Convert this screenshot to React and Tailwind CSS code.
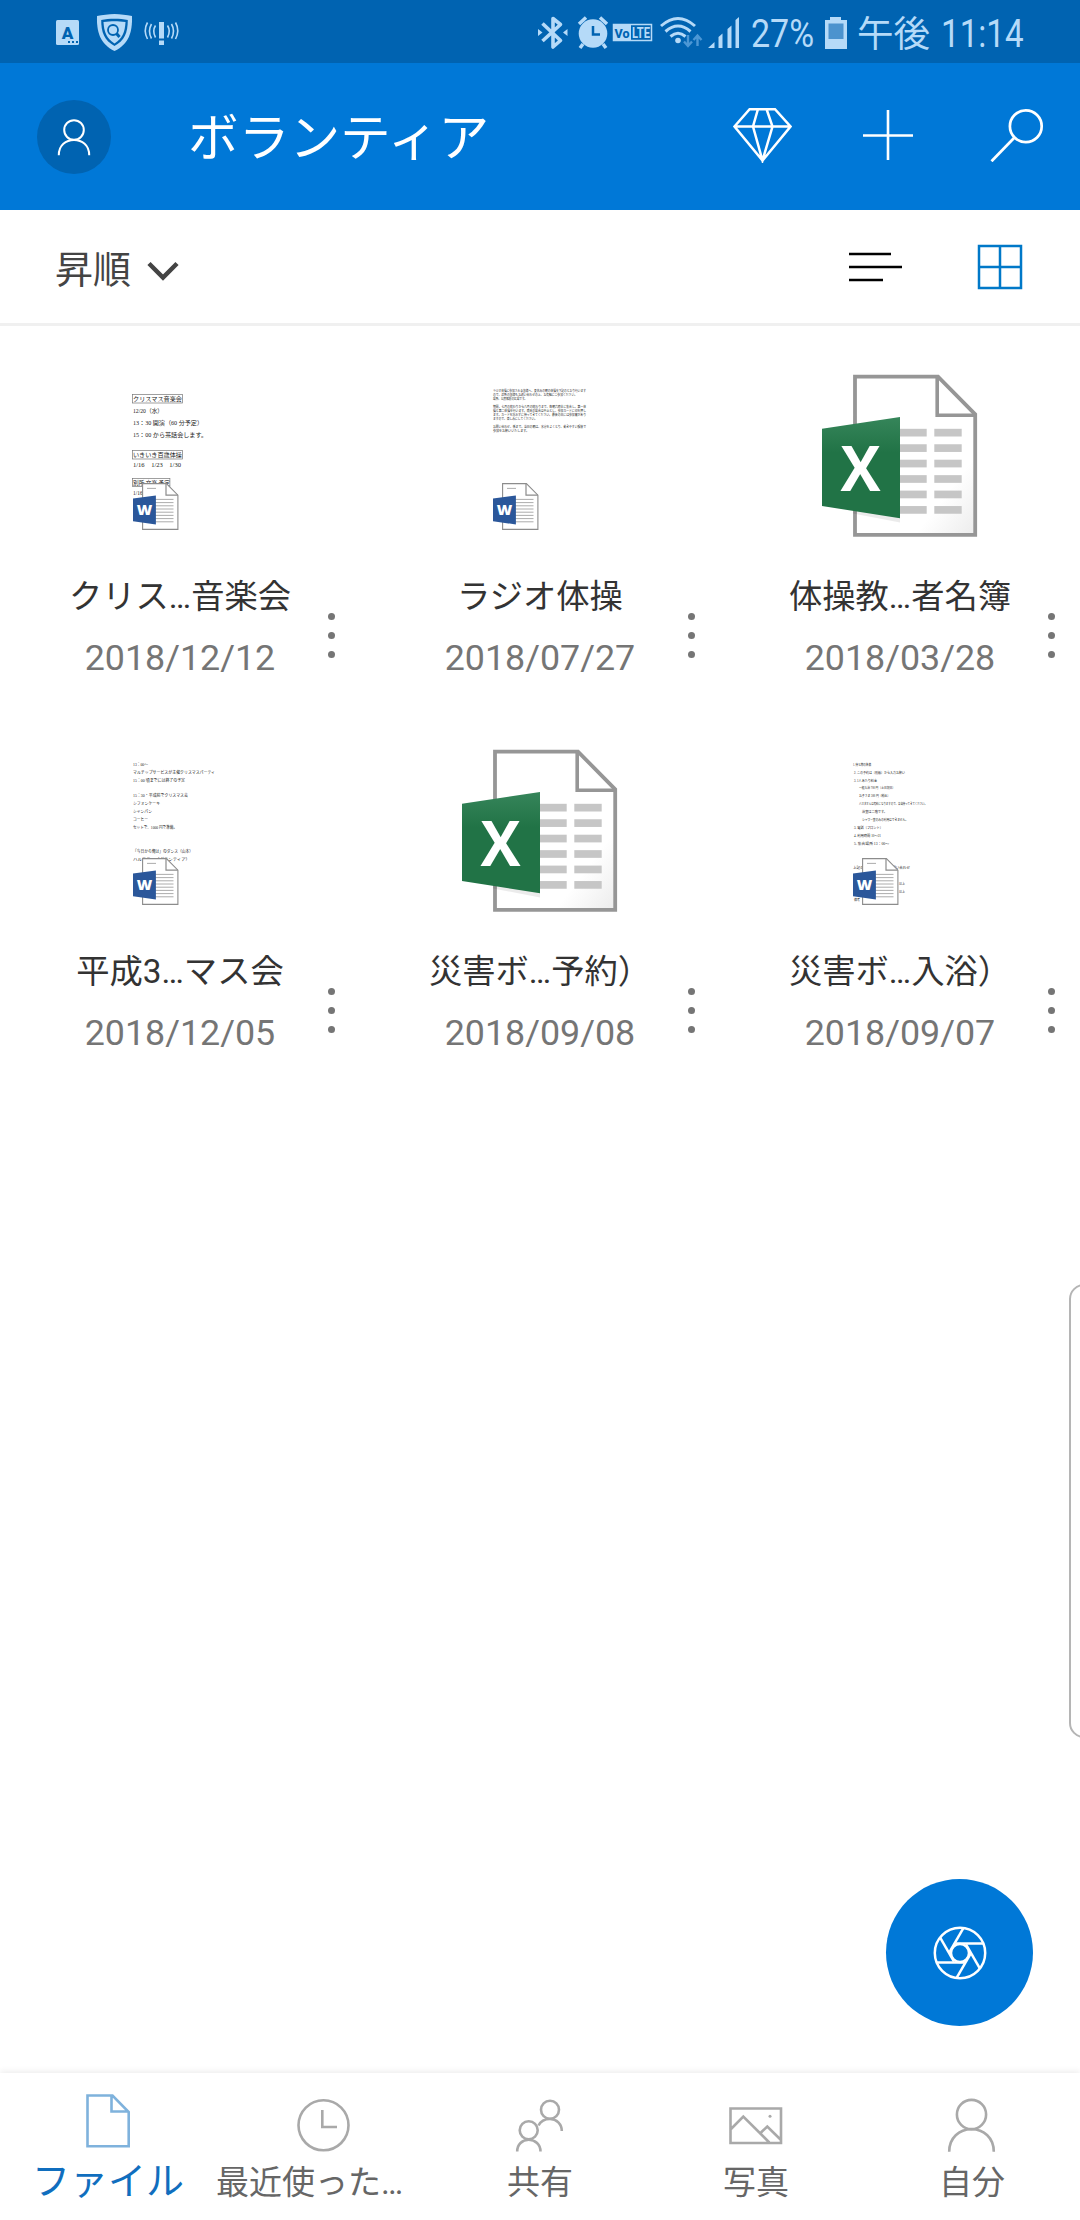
import clsx from 'clsx';

const files = [
    { name: 'クリス…音楽会', date: '2018/12/12', type: 'word', preview: 'concert' },
    { name: 'ラジオ体操', date: '2018/07/27', type: 'word', preview: 'radio' },
    { name: '体操教…者名簿', date: '2018/03/28', type: 'excel' },
    { name: '平成3…マス会', date: '2018/12/05', type: 'word', preview: 'party' },
    { name: '災害ボ…予約）', date: '2018/09/08', type: 'excel' },
    { name: '災害ボ…入浴）', date: '2018/09/07', type: 'word', preview: 'bath' },
];

// x, baseline, width, font size, text
const previews = {
    concert: [
        [1, 34, 49, 6, 'クリスマス音楽会'],
        [1, 46, 30, 6, '12/20（水）'],
        [1, 58, 70, 6, '13：30 開演（60 分予定）'],
        [1, 70, 74, 6, '15：00 から茶話会します。'],
        [1, 90, 49, 6, 'いきいき百歳体操'],
        [1, 99.5, 48, 6, '1/16　1/23　1/30'],
        [1, 117.5, 37, 6, '別所 文楽 予定'],
        [1, 127.5, 20, 6, '1/16 (水)'],
    ],
    radio: [
        [1, 24.5, 93, 3.4, 'ラジオ体操に参加される皆様へ、夏休みの朝の体操を下記のとおり行います'],
        [1, 28.5, 84, 3.4, 'ので、近所の皆様もお誘い合わせの上、お気軽にご参加ください。'],
        [1, 32.5, 34, 3.4, '場所、公民館前の広場です。'],
        [1, 40.5, 93, 3.4, '期間、七月の終わりから八月の終わりまで、毎朝六時半に集合し、第一体'],
        [1, 44.5, 93, 3.4, '操と第二体操を行います。雨天の場合は中止とし、参加カードに印を押し'],
        [1, 48.5, 93, 3.4, 'ます。カードを忘れずに持ってきてください。最後の日には参加賞があり'],
        [1, 52.5, 44, 3.4, 'ますので、楽しみにしてください。'],
        [1, 60.5, 93, 3.4, 'お問い合わせ、係まで。当日の朝は、水分をよくとり、動きやすい服装で'],
        [1, 64.5, 36, 3.4, '参加をお願いいたします。'],
    ],
    party: [
        [1, 23.5, 15, 4, '13：00～'],
        [1, 31.5, 82, 4, 'マルチップサービスが主催クリスマスパーティ'],
        [1, 39.5, 52, 4, '15：00 頃までには終了の予定'],
        [1, 55, 55, 4, '15：30・平成苑でクリスマス会'],
        [1, 63, 27, 4, 'シフォンケーキ'],
        [1, 71, 19, 4, 'シャンパン'],
        [1, 79, 15, 4, 'コーヒー'],
        [1, 87, 44, 4, 'セットで、1000 円で準備。'],
        [1, 111, 60, 4, '「今日から俺は」のダンス（山本）'],
        [1, 119, 57, 4, 'ハルモニー（ボランティア）'],
    ],
    bath: [
        [1, 23.5, 18, 3.4, '1. 持ち物の準備'],
        [2, 31.5, 51, 3.4, '2. この予約は（別紙）から入力お願い'],
        [2, 39.5, 23, 3.4, '3. 1人あたり料金'],
        [7, 47, 36, 3.4, '一般入浴 700 円（土日祝日）'],
        [7, 55, 31, 3.4, 'お子さま 300 円（税込）'],
        [7, 63, 68, 3.4, 'バスタオルは有料になりますので、各自持ってきてください。'],
        [10, 71, 25, 3.4, '浴室は二階です。'],
        [10, 79, 46, 3.4, 'シャワー室のみの利用はできません。'],
        [2, 87, 29, 3.4, '3. 電話（フロント）'],
        [2, 95, 27, 3.4, '4. 利用時間 10～21'],
        [2, 103, 35, 3.4, '5. 集合場所 13：00～'],
        [1, 127, 57, 3.4, '上記の内容についてのお問い合わせ'],
        [47, 142.5, 6, 3.4, '以上'],
        [47, 150.5, 6, 3.4, '以上'],
        [2, 158.5, 6, 3.4, '備考'],
    ],
};

const Preview = ({ kind }) => (
    <svg className="w-[120px] h-[165px]" viewBox="0 7 120 165" fill="#222">
        {previews[kind].map(([x, y, width, size, text]) => (
            <text key={y} x={x} y={y} fontSize={size} textLength={width} lengthAdjust="spacingAndGlyphs" className="font-['Liberation_Serif','Noto_Sans_CJK_JP',serif]">
                {text}
            </text>
        ))}
        {kind === 'concert' && (
            <g fill="none" stroke="#777" strokeWidth="0.7">
                <rect x="0.4" y="27.5" width="50" height="8.5" />
                <rect x="0.4" y="83.5" width="50" height="8.5" />
                <rect x="0.4" y="111.5" width="37.5" height="8" />
            </g>
        )}
    </svg>
);

const WordBadge = ({ className }) => (
    <svg className={className} viewBox="0 0 46 48">
        <path d="M9.6.6h23.8l11.5 11.6v34.2H9.6z" fill="#fff" stroke="#8c8c8c" strokeWidth="1.1" />
        <path d="M33 .8v11.4h11.8" fill="none" stroke="#8c8c8c" strokeWidth="1.2" />
        <path d="M14 5.4h9M22 16.4h18.5M22 19.6h18.5M22 22.8h18.5M22 26h18.5M22 29.2h18.5M22 32.4h18.5M22 35.6h18.5M22 38.8h18.5" stroke="#a3a3a3" strokeWidth="0.9" />
        <path d="M0 15.5 22.9 12.5v29L0 38.2z" fill="#2b579a" />
        <text x="3.8" y="32" fontSize="14.5" fontWeight="800" fill="#fff" textLength="15.5" lengthAdjust="spacingAndGlyphs" className="font-['Open_Sans',sans-serif]">W</text>
    </svg>
);

const ExcelIcon = () => (
    <svg className="w-[156px] h-[164px]" viewBox="0 0 156 164">
        <defs>
            <linearGradient id="page" x1="0" y1="0" x2="1" y2="1">
                <stop offset="0.75" stopColor="#fff" />
                <stop offset="1" stopColor="#ececec" />
            </linearGradient>
            <linearGradient id="green" x1="0" y1="0" x2="0" y2="1">
                <stop offset="0" stopColor="#36855a" />
                <stop offset="0.35" stopColor="#217346" />
            </linearGradient>
        </defs>
        <path d="M33 2.6h83l37.2 37.7v120.6H33z" fill="url(#page)" stroke="#969696" strokeWidth="3.8" />
        <path d="M115.2 2v39.2h39" fill="none" stroke="#969696" strokeWidth="3.6" />
        {[0, 1, 2, 3, 4, 5].map((row) => (
            <g key={row} fill="#c6c6c6">
                <rect x="76" y={54.8 + row * 15.45} width="28.7" height="7.7" />
                <rect x="112.3" y={54.8 + row * 15.45} width="27.4" height="7.7" />
            </g>
        ))}
        <path d="M31 134.5l47 6v8l-47-9z" fill="#000" opacity="0.08" />
        <path d="M0 54.7 78 43v101.3L0 132z" fill="url(#green)" />
        <text x="18.5" y="117" fontSize="62.5" fontWeight="700" fill="#fff" textLength="40" lengthAdjust="spacingAndGlyphs" className="font-['Open_Sans',sans-serif]">X</text>
    </svg>
);

const FileCell = ({ file }) => (
    <div className="relative w-[360px] h-[375px] flex flex-col items-center pt-[6px]">
        {file.type === 'excel' ? (
            <div className="h-[165px] w-full pl-[102px]">
                <ExcelIcon />
            </div>
        ) : (
            <div className="relative h-[165px] w-full pl-[132px]">
                <Preview kind={file.preview} />
                <WordBadge className="absolute left-[133px] top-[109px] w-[46px] h-[48px]" />
            </div>
        )}
        <div className="mt-[34px] h-[48px] leading-[48px] text-[33.3px] text-[#333]">{file.name}</div>
        <div className="mt-[14px] h-[46px] leading-[46px] text-[35.8px] text-[#757575]">{file.date}</div>
        <button className="absolute left-[326px] top-[245px] w-[10px] h-[45px] flex flex-col justify-between items-center">
            <span className="size-[7px] rounded-full bg-[#757575]" />
            <span className="size-[7px] rounded-full bg-[#757575]" />
            <span className="size-[7px] rounded-full bg-[#757575]" />
        </button>
    </div>
);

const StatusBar = () => (
    <div className="h-[63px] bg-[#0063b1] flex items-center text-[#b5daf8]">
        <svg className="w-[640px] h-[63px] shrink-0" viewBox="0 0 640 63" fill="currentColor">
            <rect x="56" y="20" width="23" height="25" rx="1.5" />
            <text x="67.5" y="38.5" textAnchor="middle" fontSize="17" fontWeight="900" fill="#0063b1" className="font-[Roboto,sans-serif]">A</text>
            <path d="M68 41h2v2h-2zM72 41h2v2h-2zM76 41h2v2h-2z" fill="#0063b1" />
            <path d="M114.500 14c6 0 12 1 17.500 2 .5 16-3 28-17.500 35-14.500-7-18-19-17.500-35 5.500-1 11.500-2 17.500-2z" />
            <path d="M114.500 18.800c5 0 9 .5 13.300 1.200 0 13-3.300 20.500-13.300 26-10-5.500-13.300-13-13.300-26 4.300-.7 8.300-1.200 13.300-1.200z" fill="#0063b1" />
            <path d="M103.500 22c8-1 14-1 22 0-.5 10-3.300 16.500-11 21.500-7.700-5-10.500-11.500-11-21.500z" />
            <circle cx="113" cy="30" r="5" fill="none" stroke="#0063b1" strokeWidth="1.8" />
            <path d="M116.500 33.500l3 3.500" stroke="#0063b1" strokeWidth="3" />
            <path d="M159 22h5v16.500h-5zM159 40.500h5V45h-5z" />
            <path d="M155.500 25.500q-3.500 5.500 0 12M151.500 24q-4 7 0 14.500M147.500 22.500q-4.500 8 0 16.500M167.500 25.500q3.500 5.500 0 12M171.500 24q4 7 0 14.500M175.500 22.500q4.500 8 0 16.500" fill="none" stroke="currentColor" strokeWidth="1.6" />
            <path d="M542.500 23.500l18 17-7.500 6.500V18.500l7.500 6-18 16.500" fill="none" stroke="currentColor" strokeWidth="3.6" strokeLinejoin="round" />
            <path d="M538 29l4.500 3.500-4.500 3.500zM567.500 29l-4.500 3.500 4.500 3.500z" />
            <circle cx="593" cy="33.500" r="14.3" />
            <path d="M583 44l-3 4M603 44l3 4M579 24l7-6.500M607 24l-7-6.500" stroke="currentColor" strokeWidth="3.5" />
            <path d="M593 26v8.500h7" fill="none" stroke="#0063b1" strokeWidth="2.5" />
        </svg>
        <svg className="w-[110px] h-[63px] shrink-0" viewBox="640 0 110 63" overflow="visible">
            <rect x="613.5" y="24.5" width="38" height="16" fill="none" stroke="currentColor" strokeWidth="1.5" />
            <path d="M613 24h18v17h-18z" fill="currentColor" />
            <text x="614.5" y="37.5" fontSize="13.5" fontWeight="800" fill="#0063b1" textLength="15" lengthAdjust="spacingAndGlyphs" className="font-[Roboto,sans-serif]">Vo</text>
            <text x="632" y="38.3" fontSize="15.5" fontWeight="700" fill="currentColor" textLength="18" lengthAdjust="spacingAndGlyphs" className="font-[Roboto,sans-serif]">LTE</text>
            <path d="M661 26q17-15 34 0M665.500 31.500q12.500-11 25 0M670.500 36.500q7.500-6.500 15 0" fill="none" stroke="currentColor" strokeWidth="3" />
            <circle cx="678" cy="40.500" r="2.8" fill="currentColor" />
            <path d="M688 35v10M684 41.500l4 4.500 4-4.500M697.500 46V36M693.500 40l4-4.500 4 4.500" fill="none" stroke="#4c97d5" strokeWidth="2.4" />
            <path d="M708 48l6.500-6v6zM718.500 37l4-3.500V48h-4zM727.500 29l4-3.500V48h-4zM735.500 20l3.500-3v31h-3.500z" fill="currentColor" />
        </svg>
        <span className="w-[64px] pl-[1px] pt-[4px] text-[39.5px] whitespace-nowrap">
            <span className="inline-block origin-left scale-x-[0.86]">27%</span>
        </span>
        <svg className="ml-[11px] mt-[2px] w-[22px] h-[32px] shrink-0" viewBox="0 0 22 32" fill="currentColor">
            <path d="M5 0h11v3h6v29H0V3h5z" />
            <path d="M3.500 6.500h15V22h-15z" fill="#4c93ce" />
        </svg>
        <span className="ml-[10px] w-[84px] pt-[7px] shrink-0 text-[36.5px] whitespace-nowrap">午後</span>
        <span className="pt-[4px] text-[39.5px] whitespace-nowrap">
            <span className="inline-block origin-left scale-x-[0.84]">11:14</span>
        </span>
    </div>
);

const Header = () => (
    <header className="h-[147px] bg-[#0078d7] flex items-center pl-[37px] text-white">
        <div className="size-[74px] rounded-full bg-[#0063b1] flex items-center justify-center">
            <svg className="w-[36px] h-[40px]" viewBox="0 0 36 40" fill="none" stroke="currentColor" strokeWidth="2">
                <circle cx="18" cy="13" r="9.8" />
                <path d="M2.800 38.200C2.800 28 10 23 18 23s15.200 5 15.200 15.200" />
            </svg>
        </div>
        <h1 className="ml-[77px] w-[544px] text-[50.7px] leading-[70px] pt-[5px]">ボランティア</h1>
        <svg className="w-[60px] h-[56px] mb-[3px]" viewBox="732 107 60 56" fill="none" stroke="currentColor" strokeWidth="2.5">
            <path d="M749.600 109.200h25.400l15.500 17.300-28 34-28-34zM734.500 126.500h56M758 109l-5 17.500 9.500 34 10-34-6-17.500" />
        </svg>
        <svg className="ml-[71px] mb-[4px] w-[50px] h-[50px]" viewBox="0 0 50 50" stroke="currentColor" strokeWidth="2.6">
            <path d="M25 0v50M0 25.500h50" />
        </svg>
        <svg className="ml-[77px] mb-[3px] w-[54px] h-[54px]" viewBox="990 108 54 54" fill="none" stroke="currentColor" strokeWidth="2.7">
            <circle cx="1025.8" cy="126.3" r="15.9" />
            <path d="M1014.500 137.500l-23 23.800" />
        </svg>
    </header>
);

const Toolbar = () => (
    <div className="h-[116px] border-b-[3px] border-[#f0f0f0] flex items-center pl-[55px]">
        <button className="flex items-center w-[794px] pt-[8px] text-[38px] text-[#444]">
            昇順
            <svg className="ml-[16px] w-[32px] h-[20px]" viewBox="0 0 32 20" fill="none" stroke="currentColor" strokeWidth="4.5">
                <path d="M2 2.500l14 14 14-14" />
            </svg>
        </button>
        <svg className="w-[53px] h-[30px]" viewBox="0 0 53 30" stroke="#000" strokeWidth="2.7">
            <path d="M0 2h42M0 15h53M0 28h34" />
        </svg>
        <svg className="ml-[75px] w-[46px] h-[46px]" viewBox="0 0 46 46" fill="none" stroke="#0078c8" strokeWidth="2.5">
            <path d="M2 2h42v42H2zM23 2v42M2 23h42" />
        </svg>
    </div>
);

const tabs = [
    {
        label: 'ファイル',
        active: true,
        icon: <path d="M87.500 2095.500h25l16.200 16.500v34.200H87.500zM111.500 2095v16.500h17" transform="translate(-78 -2090)" />,
    },
    {
        label: '最近使った…',
        long: true,
        icon: (
            <g transform="translate(-294 -2090)">
                <circle cx="323.5" cy="2125.3" r="25" />
                <path d="M322.300 2110v17h14.700" />
            </g>
        ),
    },
    {
        label: '共有',
        icon: (
            <g transform="translate(-510 -2090)">
                <circle cx="528.7" cy="2130.3" r="9" />
                <path d="M517.200 2151.500c0-7 5-11.700 11.500-11.700s11.800 4.700 11.800 11.700" />
                <circle cx="550" cy="2109.7" r="9" />
                <path d="M538.500 2125.500c2-4 6.500-6.500 11.500-6.500 6.500 0 11.800 5 11.800 12" />
            </g>
        ),
    },
    {
        label: '写真',
        icon: (
            <g transform="translate(-726 -2090)">
                <path d="M730.500 2108.500h50.500v34.500h-50.500zM731 2129l12.300-12.500 26 26M760.500 2133l6.800-6.500 13.700 13.500" />
                <circle cx="770" cy="2116.3" r="1.5" fill="currentColor" stroke="none" />
            </g>
        ),
    },
    {
        label: '自分',
        icon: (
            <g transform="translate(-942 -2090)">
                <circle cx="971.5" cy="2114.5" r="14.6" />
                <path d="M949.200 2151.700c0-14 10-22.400 22.300-22.400s22.300 8.400 22.300 22.400" />
            </g>
        ),
    },
];

const BottomNav = () => (
    <nav className="h-[147px] bg-white flex shadow-[0_-2px_6px_rgba(0,0,0,0.07)]">
        {tabs.map((tab) => (
            <div key={tab.label} className="w-[216px] pt-[17px] flex flex-col items-center">
                <svg
                    className={clsx('w-[60px] h-[64px]', tab.active ? 'text-[#7fb2dc]' : 'text-[#a9a9a9]')}
                    viewBox="0 0 60 64"
                    fill="none"
                    stroke="currentColor"
                    strokeWidth="2.6"
                >
                    {tab.icon}
                </svg>
                <span
                    className={clsx(
                        'h-[54px] leading-[54px] whitespace-nowrap',
                        tab.active ? 'text-[38px] text-[#106ebe]' : 'text-[33px] text-[#666] pt-[2px]',
                        tab.long && 'pr-[29px]',
                    )}
                >
                    {tab.label}
                </span>
            </div>
        ))}
    </nav>
);

const CameraButton = () => (
    <button className="absolute left-[886px] top-[1879px] size-[147px] rounded-full bg-[#0078d7] text-white flex items-center justify-center">
        <svg className="w-[56px] h-[56px]" viewBox="-28 -28 56 56" fill="none" stroke="currentColor" strokeWidth="2.5">
            <circle r="25.2" />
            <circle r="9" />
            {[0, 60, 120, 180, 240, 300].map((angle) => (
                <path key={angle} d="M23.200-9.500H-4.500" transform={`rotate(${angle})`} />
            ))}
        </svg>
    </button>
);

export default function App() {
    return (
        <div className="relative w-[1080px] h-[2220px] overflow-hidden bg-white flex flex-col font-[Roboto,'Noto_Sans_CJK_JP',sans-serif]" lang="ja">
            <StatusBar />
            <Header />
            <Toolbar />
            <main className="flex-1 pt-[42px] grid grid-cols-3 content-start">
                {files.map((file) => (
                    <FileCell key={file.name} file={file} />
                ))}
            </main>
            <BottomNav />
            <CameraButton />
            <div className="absolute left-[1069px] top-[1284px] w-[40px] h-[454px] rounded-[15px] border-2 border-[#b5b5b5] bg-white" />
        </div>
    );
}
